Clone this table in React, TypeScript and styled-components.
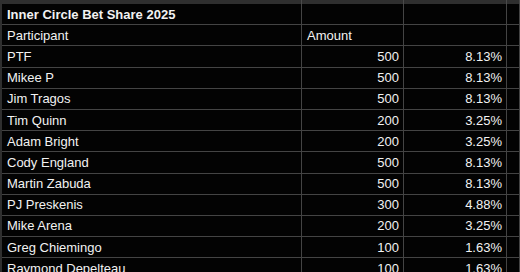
import styled, { createGlobalStyle } from "styled-components";

// one participant line of the sheet
interface Share {
  name: string;
  amount: number;
  pct: string;
}

const shares: Share[] = [
  { name: "PTF", amount: 500, pct: "8.13%" },
  { name: "Mikee P", amount: 500, pct: "8.13%" },
  { name: "Jim Tragos", amount: 500, pct: "8.13%" },
  { name: "Tim Quinn", amount: 200, pct: "3.25%" },
  { name: "Adam Bright", amount: 200, pct: "3.25%" },
  { name: "Cody England", amount: 500, pct: "8.13%" },
  { name: "Martin Zabuda", amount: 500, pct: "8.13%" },
  { name: "PJ Preskenis", amount: 300, pct: "4.88%" },
  { name: "Mike Arena", amount: 200, pct: "3.25%" },
  { name: "Greg Chiemingo", amount: 100, pct: "1.63%" },
  { name: "Raymond Depelteau", amount: 100, pct: "1.63%" },
];

const GlobalStyle = createGlobalStyle`
  html, body {
    margin: 0;
    padding: 0;
    background: #030303;
    overflow: hidden;
  }
`;

const Sheet = styled.div`
  width: 520px;
  height: 272px;
  overflow: hidden;
  background: #030303;
  border-left: 2px solid #2f2f2f;
  box-sizing: border-box;
  font-family: "Liberation Sans", Arial, sans-serif;
  font-size: 13px;
  color: #f2f2f2;
`;

// thin grey strip of the column headers, cut off at the top
const TopBand = styled.div`
  height: 4px;
  background: #2f2f2f;
  display: grid;
  grid-template-columns: 300px 102px 103px 1fr;

  & > span {
    border-right: 1px solid #4a4a4a;
  }
`;

const Row = styled.div`
  display: grid;
  grid-template-columns: 300px 102px 103px 1fr;
  height: 21.2px;
`;

const Cell = styled.div<{ $align?: "left" | "right"; $bold?: boolean }>`
  box-sizing: border-box;
  border-right: 1px solid #444;
  border-bottom: 1px solid #444;
  display: flex;
  align-items: center;
  justify-content: ${(p) => (p.$align === "right" ? "flex-end" : "flex-start")};
  padding: 0 4px 0 5px;
  font-weight: ${(p) => (p.$bold ? 700 : 400)};
  white-space: nowrap;
  overflow: hidden;
`;

export default function App() {
  return (
    <>
      <GlobalStyle />
      <Sheet>
        <TopBand>
          <span />
          <span />
          <span />
          <span />
        </TopBand>
        <Row>
          <Cell $bold>Inner Circle Bet Share 2025</Cell>
          <Cell />
          <Cell />
          <Cell />
        </Row>
        <Row>
          <Cell>Participant</Cell>
          <Cell>Amount</Cell>
          <Cell />
          <Cell />
        </Row>
        {shares.map((s) => (
          <Row key={s.name}>
            <Cell>{s.name}</Cell>
            <Cell $align="right">{s.amount}</Cell>
            <Cell $align="right">{s.pct}</Cell>
            <Cell />
          </Row>
        ))}
      </Sheet>
    </>
  );
}
